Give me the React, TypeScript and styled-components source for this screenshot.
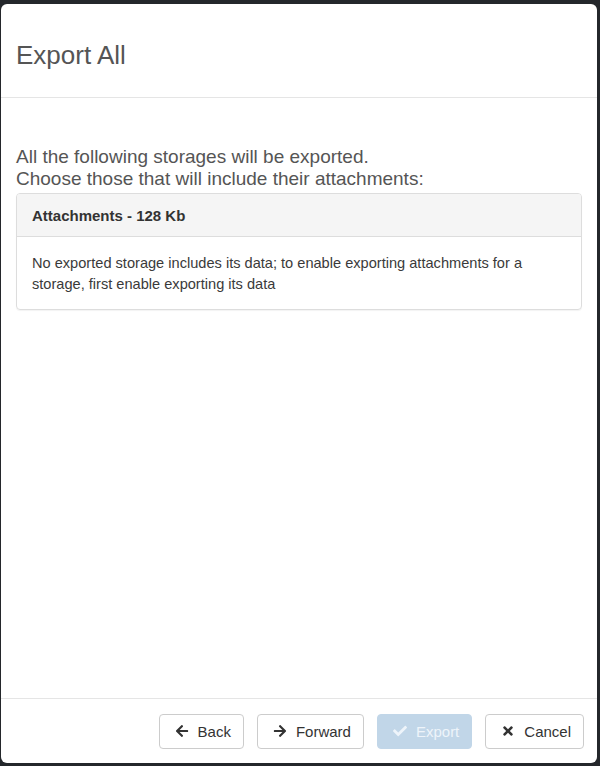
import styled, { createGlobalStyle } from "styled-components";
import { FaArrowLeft, FaArrowRight, FaCheck, FaTimes } from "react-icons/fa";

const GlobalStyle = createGlobalStyle`
  html, body {
    margin: 0;
    padding: 0;
    height: 100%;
    background: #24272b;
  }
  #root {
    height: 100%;
  }
`;

const Backdrop = styled.div`
  height: 766px;
  box-sizing: border-box;
  padding: 4px 3px 3px 1px;
  background: #24272b;
  font-family: "Liberation Sans", Arial, sans-serif;
`;

const Modal = styled.div`
  height: 100%;
  display: flex;
  flex-direction: column;
  background: #fff;
  border-radius: 6px;
  box-sizing: border-box;
  overflow: hidden;
`;

const Header = styled.div`
  height: 94px;
  flex-shrink: 0;
  display: flex;
  align-items: center;
  padding: 0 15px;
  border-bottom: 1px solid #e5e5e5;
  box-sizing: border-box;
`;

const Title = styled.h4`
  margin: 9px 0 0;
  font-size: 26px;
  font-weight: normal;
  color: #555;
`;

const Body = styled.div`
  flex: 1;
  padding: 48px 15px 0;
`;

const Intro = styled.p`
  margin: 0 0 3px;
  font-size: 19px;
  line-height: 22px;
  color: #555;
`;

const Panel = styled.div`
  border: 1px solid #ddd;
  border-radius: 4px;
  box-shadow: 0 1px 1px rgba(0, 0, 0, 0.05);
  overflow: hidden;
`;

const PanelHeading = styled.div`
  height: 42px;
  display: flex;
  align-items: center;
  padding: 0 15px;
  background: #f5f5f5;
  border-bottom: 1px solid #ddd;
  font-size: 15px;
  font-weight: bold;
  color: #333;
`;

const PanelBody = styled.div`
  padding: 16px 15px 14px;
  font-size: 14.6px;
  line-height: 21px;
  color: #3a3a3a;
`;

const Footer = styled.div`
  height: 65px;
  flex-shrink: 0;
  display: flex;
  justify-content: flex-end;
  align-items: center;
  gap: 13px;
  padding: 0 13px 0 15px;
  border-top: 1px solid #e5e5e5;
  box-sizing: border-box;
`;

const Button = styled.button<{ $primary?: boolean }>`
  height: 35px;
  display: inline-flex;
  align-items: center;
  gap: 9px;
  padding: 0 12px 0 15px;
  border-radius: 4px;
  border: 1px solid ${(p) => (p.$primary ? "#c1d6e8" : "#ccc")};
  background: ${(p) => (p.$primary ? "#c1d6e8" : "#fff")};
  color: ${(p) => (p.$primary ? "#eef4fa" : "#333")};
  font-family: "Liberation Sans", Arial, sans-serif;
  font-size: 15px;
  cursor: ${(p) => (p.$primary ? "not-allowed" : "pointer")};

  svg {
    width: 14px;
    height: 14px;
  }
`;

export default function App() {
  return (
    <>
      <GlobalStyle />
      <Backdrop>
        <Modal>
          <Header>
            <Title>Export All</Title>
          </Header>
          <Body>
            <Intro>
              All the following storages will be exported.
              <br />
              Choose those that will include their attachments:
            </Intro>
            <Panel>
              <PanelHeading>Attachments - 128 Kb</PanelHeading>
              <PanelBody>
                No exported storage includes its data; to enable exporting
                attachments for a storage, first enable exporting its data
              </PanelBody>
            </Panel>
          </Body>
          <Footer>
            <Button>
              <FaArrowLeft />
              Back
            </Button>
            <Button>
              <FaArrowRight />
              Forward
            </Button>
            <Button $primary disabled>
              <FaCheck />
              Export
            </Button>
            <Button>
              <FaTimes />
              Cancel
            </Button>
          </Footer>
        </Modal>
      </Backdrop>
    </>
  );
}
